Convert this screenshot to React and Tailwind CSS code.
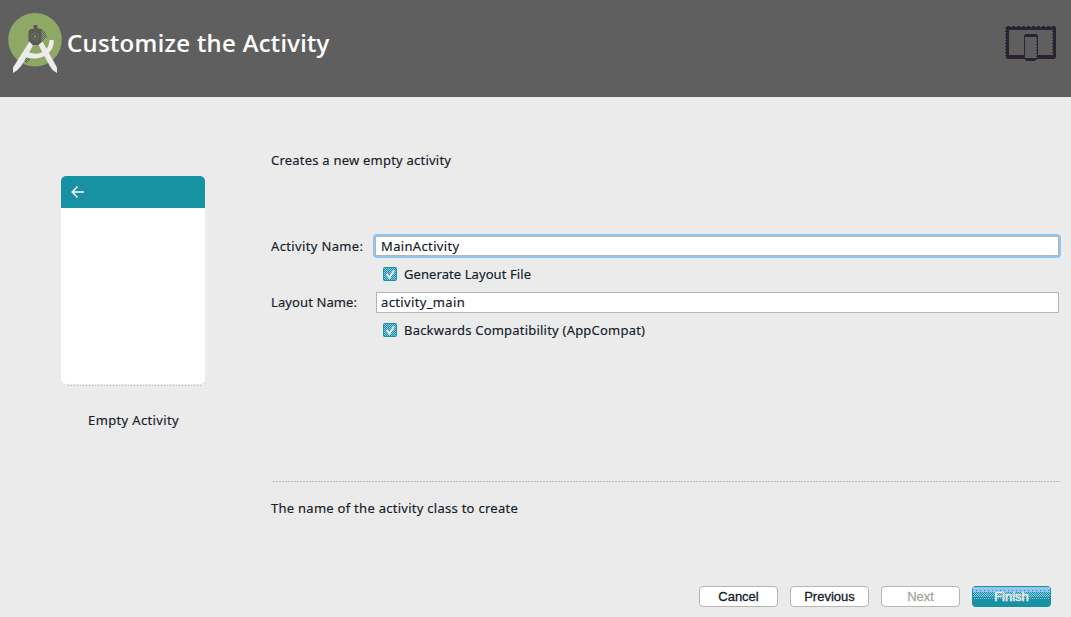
import React from "react";

function StudioLogo() {
  return (
    <svg className="h-[64px] w-[56px] shrink-0" viewBox="7 12 56 64">
      <defs>
        <pattern id="speck" width="2" height="2" patternUnits="userSpaceOnUse">
          <rect width="1" height="1" fill="#5f5f5f" />
          <rect x="1" y="1" width="1" height="1" fill="#5f5f5f" />
        </pattern>
      </defs>
      <circle cx="35" cy="39.8" r="26.8" fill="#8fa866" />
      <path d="M38 28q7 1 9 8l-3 5-4 3z M26 57l5 2-4 4-3-1z" fill="url(#speck)" shapeRendering="crispEdges" />
      <path d="M33.500 25h4v4h4v13l-3 3h-7l-3-4V31l2-2h3z" fill="#5a5b57" />
      <circle cx="35" cy="36.500" r="3.400" fill="none" stroke="#809361" strokeWidth="1" strokeDasharray="1 1" />
      <circle cx="35" cy="36.500" r="1.200" fill="#809361" />
      <path d="M29.500 41.500l3.500 4-11.500 20-4 4.500-4.500 3v-5.500z" fill="#ececec" />
      <path d="M42.500 41.500l-4 3.500 11 20.500 3 4.500 4.500 3v-5.500z" fill="#ececec" />
      <path d="M26.500 51q9 5.200 17 .5 5.500-3.500 6-11.500h4.300q.5 9-6.300 14-10 7.500-24 2.500z" fill="#ececec" />
    </svg>
  );
}

function DevicesIcon() {
  return (
    <svg className="h-[38px] w-[54px]" viewBox="1004 25 54 38" shapeRendering="crispEdges">
      <path d="M1006 27h50v31h-50zM1009 30v25h44v-25z" fill="#2b2233" fillRule="evenodd" />
      <path d="M1007 26.500h49" stroke="#2b2233" strokeDasharray="3 2" />
      <path d="M1005.500 28v30M1052.500 31v24" stroke="#2b2233" strokeDasharray="1 2" />
      <path d="M1007 58h48v1h-48z" fill="#2b2233" />
      <rect x="1024" y="34" width="14" height="26" fill="#5f5f5f" />
      <path d="M1025 34h12v1h1v2h-14v-2h1zM1024 37h1v22h-1zM1037 37h1v22h-1zM1025 58h12v2h-2v1h-9v-1h-1z" fill="#2b2233" />
      <path d="M1036.500 38v20" stroke="#2b2233" strokeDasharray="1 2" />
    </svg>
  );
}

function CheckMark() {
  return (
    <svg className="h-[14px] w-[14px] shrink-0" viewBox="0 0 14 14">
      <defs>
        <pattern id="checkDots" width="2" height="2" patternUnits="userSpaceOnUse">
          <rect width="2" height="2" fill="#1692a3" />
          <rect width="1" height="1" fill="#91c5ed" />
          <rect x="1" y="1" width="1" height="1" fill="#91c5ed" />
        </pattern>
      </defs>
      <rect width="14" height="14" rx="2" fill="#1692a3" />
      <rect x="1" y="1" width="12" height="12" rx="1" fill="url(#checkDots)" shapeRendering="crispEdges" />
      <path d="M3.500 7l3 3.500L11 3.500" fill="none" stroke="#fff" strokeWidth="1.700" />
    </svg>
  );
}

function CheckRow({ children }) {
  return (
    <label className="flex h-[20px] items-center pl-[112px]">
      <CheckMark />
      <span className="ml-[7px] whitespace-nowrap">{children}</span>
    </label>
  );
}

function FinishFill() {
  return (
    <svg className="absolute inset-0 h-[21px] w-[79px]" viewBox="0 0 79 21" shapeRendering="crispEdges">
      <defs>
        <pattern id="light" width="4" height="4" patternUnits="userSpaceOnUse">
          <path d="M0 0h1v1h-1zM2 2h1v1h-1z" fill="#1692a3" />
        </pattern>
        <pattern id="half" width="2" height="2" patternUnits="userSpaceOnUse">
          <path d="M0 0h1v1h-1zM1 1h1v1h-1z" fill="#1692a3" />
        </pattern>
        <pattern id="sparse" width="2" height="2" patternUnits="userSpaceOnUse">
          <path d="M0 0h1v1h-1z" fill="#91c5ed" />
        </pattern>
      </defs>
      <rect width="79" height="21" fill="#1692a3" />
      <rect x="1" y="1" width="77" height="10" fill="#91c5ed" />
      <rect x="1" y="3" width="77" height="3" fill="url(#light)" />
      <rect x="1" y="6" width="77" height="5" fill="url(#half)" />
      <rect x="1" y="11" width="77" height="3" fill="url(#sparse)" />
    </svg>
  );
}

function DialogButton({ children, className = "" }) {
  return (
    <button className={"h-[21px] w-[79px] rounded-[4px] border border-[#b5b5b5] bg-white text-center font-['Liberation_Sans',sans-serif] text-[13px] leading-[20px] [-webkit-text-stroke:0.3px_currentColor] " + className}>
      {children}
    </button>
  );
}

export default function App() {
  return (
    <div className="flex h-[617px] w-[1071px] flex-col overflow-hidden bg-[#ebebeb] font-['Noto_Sans',sans-serif] text-[13px] leading-[20px] text-[#14202a] [-webkit-text-stroke:0.15px_currentColor]">
      <header className="flex h-[97px] shrink-0 items-start bg-[#5f5f5f] pl-[7px] pt-[12px]">
        <StudioLogo />
        <h1 className="ml-[4px] mt-[14px] whitespace-nowrap text-[24px] font-medium leading-[34px] tracking-[0.35px] text-white">Customize the Activity</h1>
        <div className="ml-auto mr-[13px] mt-[13px]"><DevicesIcon /></div>
      </header>

      <main className="flex h-[440px] shrink-0">
        <aside className="flex w-[271px] shrink-0 flex-col pl-[61px] pt-[79px]">
          <div className="h-[208px] w-[144px] overflow-hidden rounded-[5px] bg-white">
            <div className="flex h-[32px] items-center bg-[#1692a3] pl-[10px]">
              <svg className="h-[12px] w-[13px]" viewBox="0 0 13 12" fill="none" stroke="#fff" strokeWidth="1.500">
                <path d="M6.500 .5L1.200 6l5.300 5.500M1 6h12" />
              </svg>
            </div>
          </div>
          <div className="ml-[7px] mt-px h-px w-[133px] bg-[repeating-linear-gradient(90deg,#b5b5b5_0_1px,transparent_1px_3px)]" />
          <div className="mt-[24px] w-[145px] text-center tracking-[0.35px]">Empty Activity</div>
        </aside>

        <section className="flex flex-1 flex-col pt-[53px]">
          <p className="tracking-[0.22px]">Creates a new empty activity</p>
          <div className="mt-[64px] flex h-[24px] items-center tracking-[0.35px]">
            <label className="w-[102px] whitespace-nowrap">Activity Name:</label>
            <div className="h-[24px] w-[688px] rounded-[4px] bg-[#91c5ed] p-[2px]">
              <div className="flex h-[20px] items-center rounded-[1px] border border-[#b5b5b5] bg-white pl-[5px]">MainActivity</div>
            </div>
          </div>
          <div className="mt-[6px] tracking-[0.08px]"><CheckRow>Generate Layout File</CheckRow></div>
          <div className="mt-[8px] flex h-[21px] items-center">
            <label className="mb-px w-[105px] whitespace-nowrap tracking-[0.1px]">Layout Name:</label>
            <div className="flex h-[21px] w-[683px] items-center border border-[#b5b5b5] bg-white pb-px pl-[4px] tracking-[0.35px]">activity_main</div>
          </div>
          <div className="mt-[7px] tracking-[0.21px]"><CheckRow>Backwards Compatibility (AppCompat)</CheckRow></div>
          <div className="ml-[2px] mt-[141px] h-px w-[787px] bg-[repeating-linear-gradient(90deg,#b5b5b5_0_2px,transparent_2px_3px)]" />
          <p className="mt-[16px] tracking-[0.27px]">The name of the activity class to create</p>
        </section>
      </main>

      <footer className="mt-[49px] flex justify-end gap-[12px] pr-[20px]">
        <DialogButton>Cancel</DialogButton>
        <DialogButton>Previous</DialogButton>
        <DialogButton className="text-[#a5a89d]">Next</DialogButton>
        <button className="relative h-[21px] w-[79px] overflow-hidden rounded-[4px] text-center font-['Liberation_Sans',sans-serif] text-[13px] leading-[22px] text-[#ebebeb] [-webkit-text-stroke:0.6px_currentColor]">
          <FinishFill />
          <span className="relative">Finish</span>
        </button>
      </footer>
    </div>
  );
}
